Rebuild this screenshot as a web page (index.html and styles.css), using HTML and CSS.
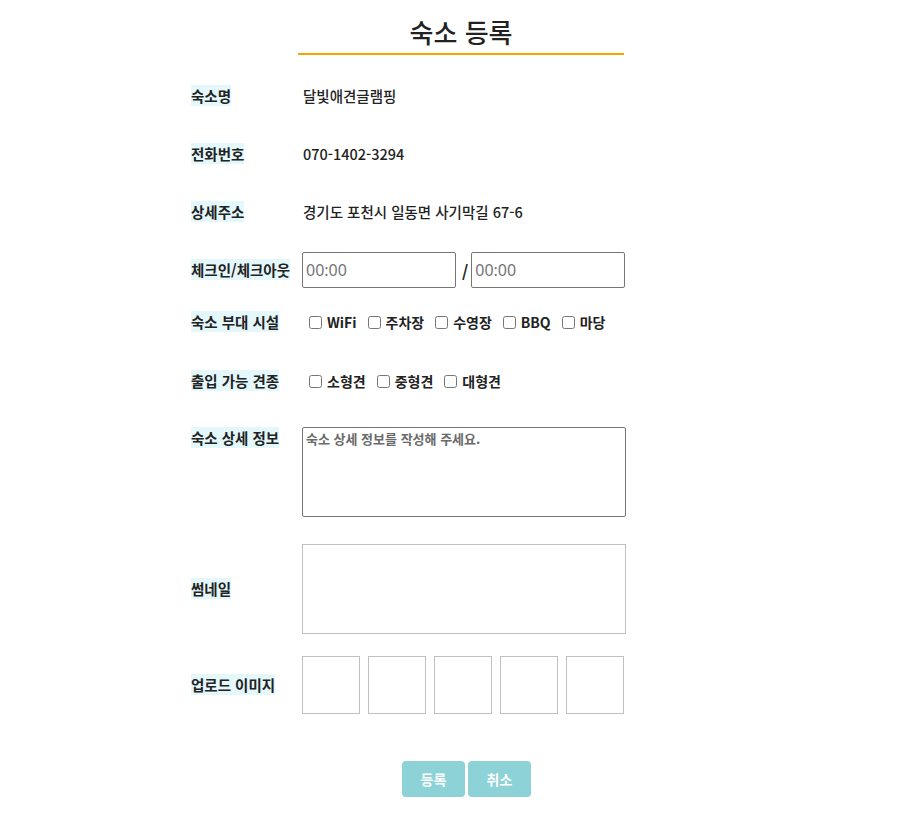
FILE: index.html
```html
<!DOCTYPE html>
<html lang="ko">
<head>
<meta charset="utf-8">
<title>숙소 등록</title>
<link rel="stylesheet" href="styles.css">
</head>
<body>
<div class="page">
  <h1 class="title">숙소 등록</h1>
  <form class="form">
    <div class="row r1">
      <div class="label"><span>숙소명</span></div>
      <div class="value">달빛애견글램핑</div>
    </div>
    <div class="row r2">
      <div class="label"><span>전화번호</span></div>
      <div class="value">070-1402-3294</div>
    </div>
    <div class="row r3">
      <div class="label"><span>상세주소</span></div>
      <div class="value">경기도 포천시 일동면 사기막길 67-6</div>
    </div>
    <div class="row r4">
      <div class="label"><span>체크인/체크아웃</span></div>
      <div class="value times">
        <input class="time" type="text" placeholder="00:00">
        <span class="slash">/</span>
        <input class="time" type="text" placeholder="00:00">
      </div>
    </div>
    <div class="row r5">
      <div class="label"><span>숙소 부대 시설</span></div>
      <div class="value checks">
        <label class="check"><input type="checkbox">WiFi</label>
        <label class="check"><input type="checkbox">주차장</label>
        <label class="check"><input type="checkbox">수영장</label>
        <label class="check"><input type="checkbox">BBQ</label>
        <label class="check"><input type="checkbox">마당</label>
      </div>
    </div>
    <div class="row r6">
      <div class="label"><span>출입 가능 견종</span></div>
      <div class="value checks">
        <label class="check"><input type="checkbox">소형견</label>
        <label class="check"><input type="checkbox">중형견</label>
        <label class="check"><input type="checkbox">대형견</label>
      </div>
    </div>
    <div class="row r7 top">
      <div class="label"><span>숙소 상세 정보</span></div>
      <div class="value"><textarea class="detail" placeholder="숙소 상세 정보를 작성해 주세요."></textarea></div>
    </div>
    <div class="row r8">
      <div class="label"><span>썸네일</span></div>
      <div class="value"><div class="thumb"></div></div>
    </div>
    <div class="row r9">
      <div class="label"><span>업로드 이미지</span></div>
      <div class="value uploads">
        <div class="up"></div>
        <div class="up"></div>
        <div class="up"></div>
        <div class="up"></div>
        <div class="up"></div>
      </div>
    </div>
    <div class="buttons">
      <button type="button" class="btn">등록</button>
      <button type="button" class="btn">취소</button>
    </div>
  </form>
</div>
</body>
</html>
```
FILE: styles.css
```css
* { box-sizing: border-box; }
html, body { margin: 0; padding: 0; background: #fff; }
body {
  font-family: "Noto Sans CJK KR", "Noto Sans", sans-serif;
  color: #222;
}
.page {
  width: 540px;
  margin: 0 auto;
  padding-top: 12px;
}
.title {
  width: 326px;
  margin: 0 0 0 109px;
  text-align: center;
  font-size: 26px;
  font-weight: 500;
  line-height: 40px;
  padding-bottom: 1px;
  border-bottom: 2px solid #f5a500;
  color: #222;
}
.form {
  padding-left: 2px;
}
.row {
  display: flex;
  align-items: center;
}
.row.top { align-items: flex-start; }
.label {
  width: 111px;
  flex: none;
  font-size: 14.5px;
  font-weight: 700;
  line-height: 20px;
}
.label span { background: #e4f7fb; }
.value {
  font-size: 14.5px;
  font-weight: 500;
  line-height: 20px;
  color: #222;
}
.r1 .value, .r2 .value, .r3 .value { padding-left: 1px; }
.r1 { margin-top: 31px; }
.r2 { margin-top: 38px; }
.r3 { margin-top: 38px; }
.r4 { margin-top: 30px; }
.r5 { margin-top: 24px; }
.r6 { margin-top: 39px; }
.r7 { margin-top: 36px; }
.r7 .label { padding-top: 1px; }
.r8 { margin-top: 27px; }
.r9 { margin-top: 22px; }
.value.times { display: flex; align-items: center; }
.time {
  width: 154px;
  height: 36px;
  border: 1px solid #767676;
  border-radius: 2px;
  padding: 0 3px;
  font-family: "Noto Sans", "Noto Sans CJK KR", sans-serif;
  font-size: 16px;
  color: #222;
}
.time::placeholder { color: #757575; }
.slash {
  font-size: 16px;
  font-weight: 700;
  margin: 2px 3px 0 6px;
}
.checks { display: flex; align-items: center; padding-left: 4px; }
.check {
  display: flex;
  align-items: center;
  margin-right: 8px;
  font-size: 14px;
  font-weight: 700;
}
.check input {
  width: 13px;
  height: 13px;
  margin: 0 5px 0 3px;
}
.detail {
  display: block;
  width: 324px;
  height: 90px;
  border: 1px solid #767676;
  border-radius: 2px;
  padding: 2px 3px;
  resize: none;
  font-family: "Noto Sans CJK KR", sans-serif;
  font-size: 13px;
  font-weight: 700;
  line-height: 17px;
}
.detail::placeholder { color: #6a6a6a; }
.thumb {
  width: 324px;
  height: 90px;
  border: 1px solid #c0c0c0;
}
.uploads {
  display: flex;
  justify-content: space-between;
  width: 322px;
}
.up {
  width: 58px;
  height: 58px;
  border: 1px solid #c0c0c0;
}
.buttons {
  display: flex;
  gap: 3px;
  margin-top: 47px;
  padding-left: 211px;
}
.btn {
  width: 63px;
  height: 36px;
  border: none;
  border-radius: 4px;
  background: #8cd2d7;
  color: #fff;
  font-family: "Noto Sans CJK KR", sans-serif;
  font-size: 14px;
  font-weight: 700;
  padding: 0;
}
```
